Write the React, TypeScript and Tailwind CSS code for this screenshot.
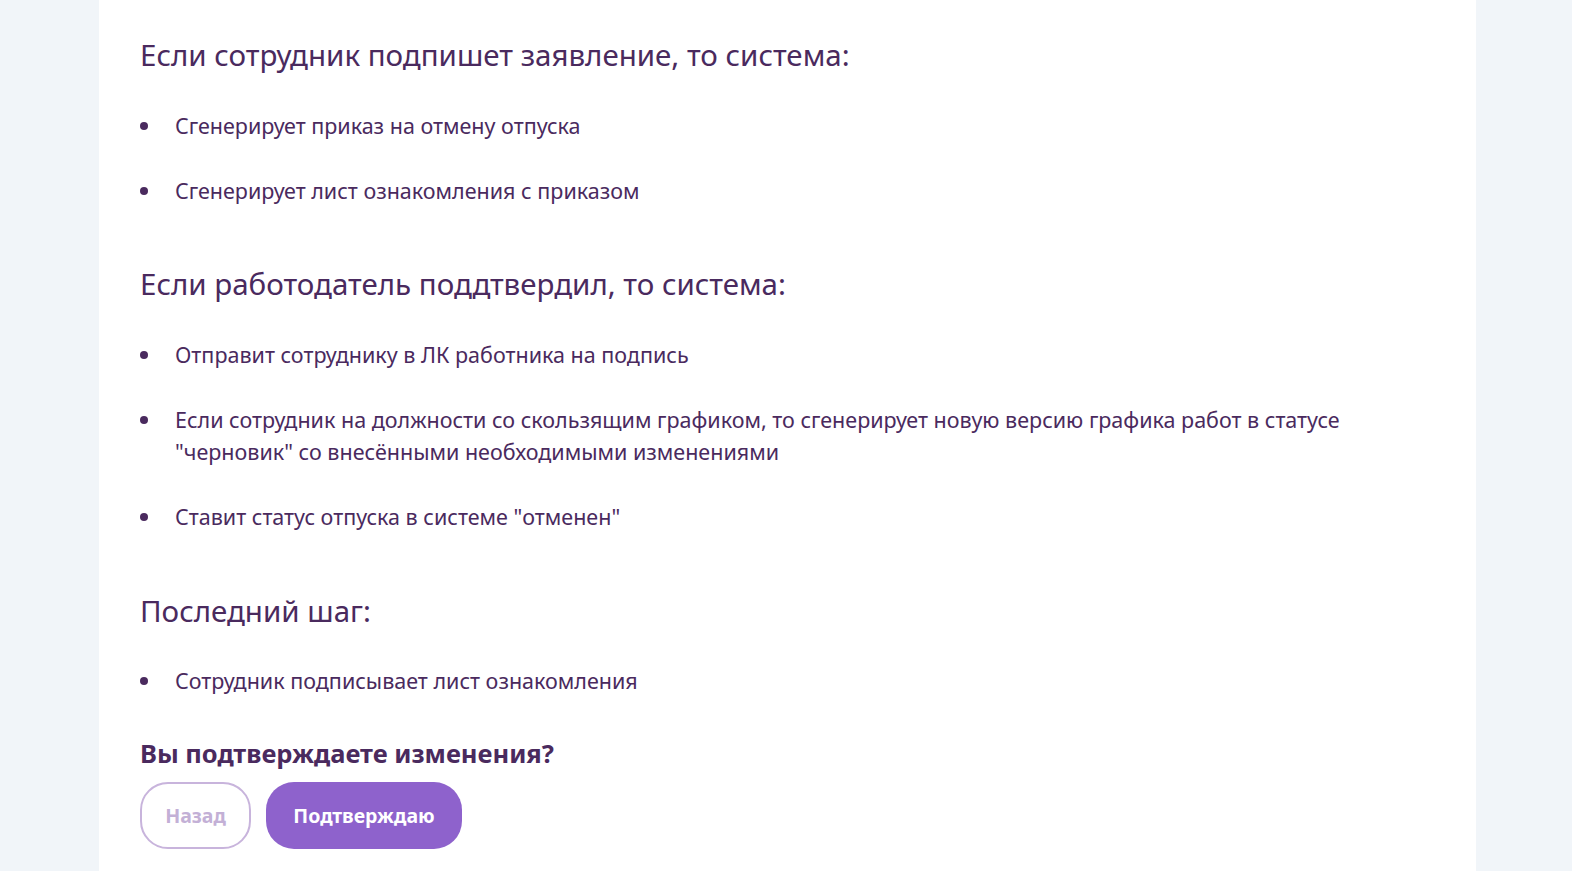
import React from "react";

const Bullet = ({ children }: { children: React.ReactNode }) => (
  <li className="flex items-start">
    <span className="w-[35px] shrink-0 flex h-[32px] items-center">
      <span className="block w-[8px] h-[8px] rounded-full bg-[#4a2a5e]" />
    </span>
    <span className="text-[21.5px] leading-[32px]">{children}</span>
  </li>
);

export default function App() {
  return (
    <div className="h-[871px] overflow-hidden bg-[#f1f5f9]" style={{ fontFamily: '"Noto Sans", "Open Sans", sans-serif' }}>
      <div className="ml-[99px] w-[1377px] h-full bg-white pl-[41px] pr-[40px] text-[#4a2a5e]">
        <h2 className="pt-[35px] text-[29.5px] leading-[40px] font-normal">Если сотрудник подпишет заявление, то система:</h2>
        <ul className="mt-[35px] flex flex-col gap-[33px]">
          <Bullet>Сгенерирует приказ на отмену отпуска</Bullet>
          <Bullet>Сгенерирует лист ознакомления с приказом</Bullet>
        </ul>
        <h2 className="mt-[57px] text-[29.5px] leading-[40px] font-normal">Если работодатель поддтвердил, то система:</h2>
        <ul className="mt-[35px] flex flex-col gap-[33px]">
          <Bullet>Отправит сотруднику в ЛК работника на подпись</Bullet>
          <Bullet>
            Если сотрудник на должности со скользящим графиком, то сгенерирует новую версию графика работ в статусе
            <br />
            "черновик" со внесёнными необходимыми изменениями
          </Bullet>
          <Bullet>Ставит статус отпуска в системе "отменен"</Bullet>
        </ul>
        <h2 className="mt-[58px] text-[29.5px] leading-[40px] font-normal">Последний шаг:</h2>
        <ul className="mt-[34px] flex flex-col gap-[33px]">
          <Bullet>Сотрудник подписывает лист ознакомления</Bullet>
        </ul>
        <h3 className="mt-[40px] text-[25.5px] leading-[32px] font-bold">Вы подтверждаете изменения?</h3>
        <div className="mt-[13px] flex gap-[15px]">
          <button className="h-[67px] w-[111px] rounded-[28px] border-2 border-[#c8b4dc] bg-white text-[19.5px] font-bold text-[#c3b0d6]">
            Назад
          </button>
          <button className="h-[67px] w-[196px] rounded-[28px] bg-[#8e62cc] text-[19.5px] font-bold text-white">
            Подтверждаю
          </button>
        </div>
      </div>
    </div>
  );
}
